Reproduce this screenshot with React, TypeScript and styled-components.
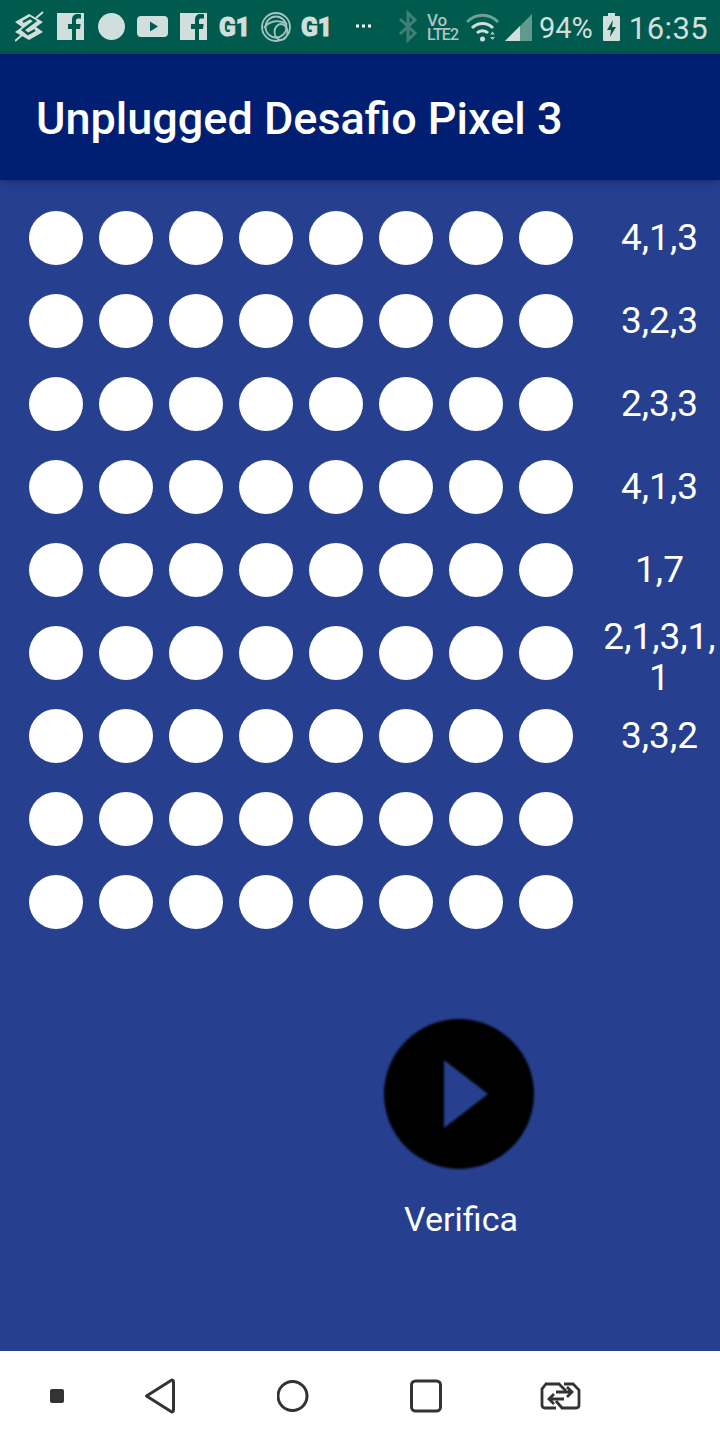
import React from 'react';
import styled, { createGlobalStyle } from 'styled-components';

const GlobalStyle = createGlobalStyle`
    html, body {
        margin: 0;
        padding: 0;
        background: #ffffff;
        font-family: Roboto, "Liberation Sans", sans-serif;
    }
`;

const Screen = styled.div`
    width: 720px;
    height: 1440px;
    display: flex;
    flex-direction: column;
    overflow: hidden;
    background: #26408f;
`;

const StatusBar = styled.div`
    height: 54px;
    flex: none;
    display: flex;
    align-items: center;
    padding: 0 14px 0 15px;
    background: #005a4e;
    color: #d0dfdc;
`;

const StatusIcons = styled.div`
    display: flex;
    align-items: center;
    flex: 1;
`;

const StatusIcon = styled.svg`
    display: block;
    flex: none;
    height: 54px;
`;

const Volte = styled.div`
    width: 39px;
    flex: none;
    padding-top: 1px;
    font-size: 16px;
    font-weight: 500;
    line-height: 14px;
    letter-spacing: -0.8px;
    color: #a9c6c0;
`;

const VolteTop = styled.span`
    font-size: 17px;
    letter-spacing: 0;
`;

const Percent = styled.span`
    font-size: 29px;
    padding-top: 2px;
    margin: 0 10px 0 -1px;
`;

const Clock = styled.span`
    font-size: 31px;
    padding-top: 2px;
    margin-left: 9px;
    letter-spacing: 0.4px;
`;

const AppBar = styled.header`
    height: 126px;
    flex: none;
    display: flex;
    align-items: center;
    padding: 2px 0 0 36px;
    box-sizing: border-box;
    background: #001f73;
    color: #ffffff;
    font-size: 45px;
    font-weight: 500;
    box-shadow: 0 2px 8px rgba(0, 10, 50, 0.35);
    position: relative;
`;

const Content = styled.main`
    flex: 1;
    display: flex;
    flex-direction: column;
    padding-top: 16px;
    color: #ffffff;
`;

const PuzzleRow = styled.div`
    height: 83px;
    display: flex;
    align-items: center;
    padding-left: 21px;
`;

const DotCell = styled.div`
    width: 70px;
    height: 70px;
    flex: none;
    display: flex;
    align-items: center;
    justify-content: center;
`;

const Dot = styled.div`
    width: 54px;
    height: 54px;
    border-radius: 50%;
    background: #ffffff;
    filter: blur(0.6px);
`;

const Hint = styled.div<{ $wrapped: boolean }>`
    width: 119px;
    margin-left: 19px;
    padding-top: ${({ $wrapped }) => ($wrapped ? '8px' : '0')};
    font-size: 37px;
    line-height: 41px;
    text-align: center;
    overflow-wrap: anywhere;
`;

const ActionColumn = styled.div`
    width: 150px;
    margin: 76px 0 0 384px;
    display: flex;
    flex-direction: column;
`;

const PlayIcon = styled.svg`
    display: block;
    filter: blur(0.9px);
`;

const ActionLabel = styled.div`
    margin-top: 28px;
    padding-left: 4px;
    font-size: 34px;
    line-height: 44px;
    text-align: center;
    white-space: nowrap;
`;

const NavBar = styled.nav`
    height: 89px;
    flex: none;
    display: flex;
    align-items: center;
    padding-left: 50px;
    background: #ffffff;
`;

const NavIcon = styled.svg`
    display: block;
    flex: none;
`;

const hints = ['4,1,3', '3,2,3', '2,3,3', '4,1,3', '1,7', '2,1,3,1,1', '3,3,2', '', ''];
const dots = [0, 1, 2, 3, 4, 5, 6, 7];

const App: React.FC = () => {
    return (
        <Screen>
            <GlobalStyle />
            <StatusBar>
                <StatusIcons>
                    {/* bank logo */}
                    <StatusIcon width="42" viewBox="0 0 42 54">
                        <path d="M14 14 28 22l-7 5 7 5-14 8L0 32l7-5-7-5Z" fill="currentColor" />
                        <path d="M8 22l7-4 5 3L8 30l5 4 7-4" fill="none" stroke="#005a4e" strokeWidth="2.500" />
                        <path d="M21 18l7-6M0 41l7-6" fill="none" stroke="currentColor" strokeWidth="2" />
                    </StatusIcon>
                    {/* facebook */}
                    <StatusIcon width="41" viewBox="0 0 41 54">
                        <path
                            d="M0 13h27v27h-8V29h4l.6-5H19v-3c0-1.500.5-2.400 2.400-2.400H24v-4.300c-.6-.1-2-.2-3.400-.2-3.400 0-5.600 2-5.600 5.800V24h-4v5h4v11H0Z"
                            fill="currentColor"
                        />
                    </StatusIcon>
                    <StatusIcon width="39" viewBox="0 0 39 54">
                        <circle cx="13.500" cy="26.500" r="13.500" fill="currentColor" />
                    </StatusIcon>
                    {/* youtube */}
                    <StatusIcon width="43" viewBox="0 0 43 54">
                        <path
                            d="M4 16h23c2.500 0 4 1.500 4 4v13c0 2.500-1.500 4-4 4H4c-2.500 0-4-1.500-4-4V20c0-2.500 1.500-4 4-4Zm9 5.500v10l8-5Z"
                            fill="currentColor"
                            fillRule="evenodd"
                        />
                    </StatusIcon>
                    <StatusIcon width="39" viewBox="0 0 39 54">
                        <path
                            d="M0 13h27v27h-8V29h4l.6-5H19v-3c0-1.500.5-2.400 2.400-2.400H24v-4.300c-.6-.1-2-.2-3.400-.2-3.400 0-5.600 2-5.600 5.800V24h-4v5h4v11H0Z"
                            fill="currentColor"
                        />
                    </StatusIcon>
                    {/* g1 */}
                    <StatusIcon width="42" viewBox="0 0 42 54">
                        <text
                            x="0"
                            y="36"
                            fontFamily="Roboto"
                            fontSize="26"
                            fontWeight="900"
                            fill="currentColor"
                            stroke="currentColor"
                            strokeWidth="1"
                            textLength="31"
                            lengthAdjust="spacingAndGlyphs"
                        >
                            G1
                        </text>
                    </StatusIcon>
                    {/* globo */}
                    <StatusIcon width="40" viewBox="0 0 40 54">
                        <g fill="none" stroke="currentColor" strokeWidth="1.800" opacity="0.8">
                            <circle cx="15" cy="27" r="14" />
                            <circle cx="15" cy="27" r="10.500" />
                            <ellipse cx="20" cy="32" rx="6.500" ry="8" />
                            <path d="M3 28c5-7 14-9 23-4" />
                        </g>
                    </StatusIcon>
                    <StatusIcon width="55" viewBox="0 0 55 54">
                        <text
                            x="0"
                            y="36"
                            fontFamily="Roboto"
                            fontSize="26"
                            fontWeight="900"
                            fill="currentColor"
                            stroke="currentColor"
                            strokeWidth="1"
                            textLength="31"
                            lengthAdjust="spacingAndGlyphs"
                        >
                            G1
                        </text>
                    </StatusIcon>
                    <StatusIcon width="43" viewBox="0 0 43 54">
                        <path d="M0 24.500h3v3H0Zm6 0h3v3H6Zm6 0h3v3h-3Z" fill="#ffffff" />
                    </StatusIcon>
                    {/* bluetooth */}
                    <StatusIcon width="28" viewBox="0 0 28 54">
                        <path d="M1 19 16 33l-7 7V13l7 7L1 34" fill="none" stroke="#3f8074" strokeWidth="3" />
                    </StatusIcon>
                    <Volte>
                        <VolteTop>Vo</VolteTop>
                        <br />
                        LTE2
                    </Volte>
                    {/* wifi */}
                    <StatusIcon width="39" viewBox="0 0 39 54">
                        <path d="M1 22c9-9 22-9 31 0" fill="none" stroke="#6ea095" strokeWidth="3" />
                        <path d="M6 28c6-6 15-6 21 0" fill="none" stroke="currentColor" strokeWidth="3" />
                        <path d="M11 33c3-3 8-3 11 0" fill="none" stroke="currentColor" strokeWidth="3" />
                        <circle cx="16.500" cy="39" r="2.500" fill="currentColor" />
                        <path d="M24 34.500h5l-2.500-3Zm0 2.500h5l-2.500 3Z" fill="#a9c6c0" />
                    </StatusIcon>
                    <StatusIcon width="35" viewBox="0 0 35 54">
                        <path d="M0 41 27 14v27Z" fill="#5f9a8e" />
                        <path d="M0 41 15 26v15Z" fill="currentColor" />
                    </StatusIcon>
                    <Percent>94%</Percent>
                    <StatusIcon width="17" viewBox="0 0 17 54">
                        <path
                            d="M5 13h7v3h4a1 1 0 0 1 1 1v23a1 1 0 0 1-1 1H1a1 1 0 0 1-1-1V17a1 1 0 0 1 1-1h4Zm5 7-6 10h4l-1 7 6-10H9Z"
                            fill="currentColor"
                            fillRule="evenodd"
                        />
                    </StatusIcon>
                    <Clock>16:35</Clock>
                </StatusIcons>
            </StatusBar>
            <AppBar>Unplugged Desafio Pixel 3</AppBar>
            <Content>
                {hints.map((hint, rowIndex) => (
                    <PuzzleRow key={rowIndex}>
                        {dots.map((dot) => (
                            <DotCell key={dot}>
                                <Dot />
                            </DotCell>
                        ))}
                        <Hint $wrapped={hint.length > 8}>{hint}</Hint>
                    </PuzzleRow>
                ))}
                <ActionColumn>
                    <PlayIcon width="150" height="150" viewBox="0 0 150 150">
                        <circle cx="75" cy="75" r="75" fill="#000000" />
                        <path d="M60 41v68l44-34Z" fill="#26408f" />
                    </PlayIcon>
                    <ActionLabel>Verifica</ActionLabel>
                </ActionColumn>
            </Content>
            <NavBar>
                <NavIcon width="95" height="36" viewBox="0 0 95 36">
                    <rect x="0" y="11" width="14" height="14" rx="2" fill="#333333" />
                </NavIcon>
                <NavIcon width="132" height="36" viewBox="0 0 132 36">
                    <path
                        d="M1.500 18 26 2.500c1.500-1 2.500-.3 2.500 1.500v28c0 1.800-1 2.500-2.500 1.500L1.500 18Z"
                        fill="none"
                        stroke="#333333"
                        strokeWidth="3"
                        strokeLinejoin="round"
                    />
                </NavIcon>
                <NavIcon width="133" height="36" viewBox="0 0 133 36">
                    <circle cx="15.500" cy="18" r="14.500" fill="none" stroke="#333333" strokeWidth="3" />
                </NavIcon>
                <NavIcon width="130" height="36" viewBox="0 0 130 36">
                    <rect x="1.500" y="3" width="29" height="30" rx="4" fill="none" stroke="#333333" strokeWidth="3" />
                </NavIcon>
                <NavIcon width="42" height="36" viewBox="0 0 42 36">
                    <g fill="none" stroke="#333333" strokeWidth="2.800">
                        <path d="M16 30H5q-3 0-3-3V11l4-5h13l7 7" />
                        <path d="M24 6h9l6 6v15q0 3-3 3H22l-6-7" />
                        <path d="M16 14h16m-5-5 5 5-5 5" />
                        <path d="M24 21H9m5-5-5 5 5 5" />
                    </g>
                </NavIcon>
            </NavBar>
        </Screen>
    );
};

export default App;
